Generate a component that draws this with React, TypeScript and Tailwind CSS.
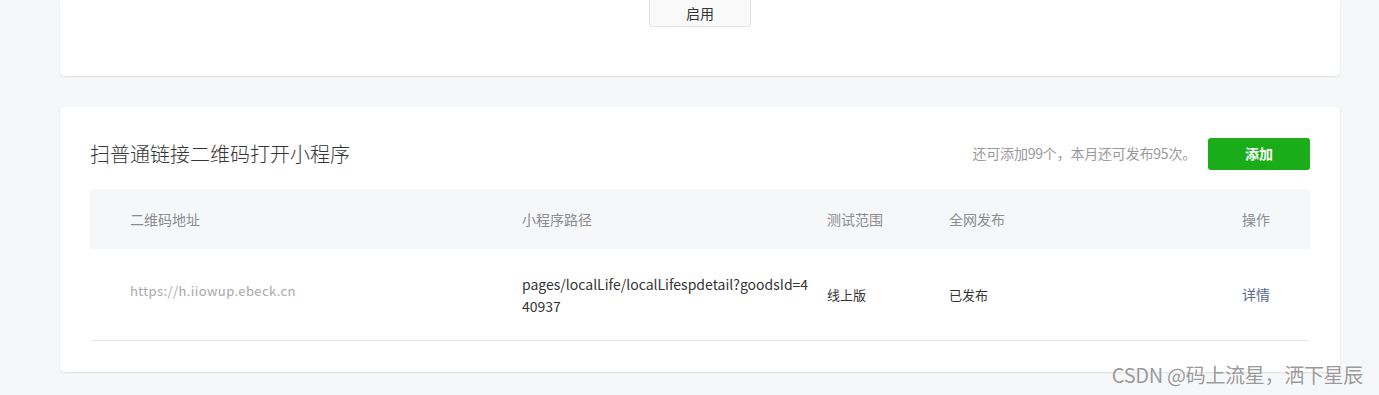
import React from "react";

const rows = [
  {
    url: "https://h.iiowup.ebeck.cn",
    path: "pages/localLife/localLifespdetail?goodsId=440937",
    range: "线上版",
    status: "已发布",
  },
];

export default function App() {
  return (
    <div
      className="relative w-[1379px] h-[395px] overflow-hidden bg-[#f6f7f9] text-[#353535]"
      style={{ fontFamily: '"Noto Sans CJK SC", "Noto Sans", sans-serif' }}
    >
      <div className="px-[60px] pr-[39px]">
        {/* top card */}
        <div className="h-[76px] bg-white rounded-b-[4px] shadow-[0_1px_2px_rgba(0,0,0,0.1)] flex justify-center">
          <button className="mt-[-6px] h-[33px] w-[102px] rounded-[3px] border border-[#e2e2e2] bg-[#f9f9f9] text-[14px] text-[#353535] leading-none pt-[5px]">
            启用
          </button>
        </div>

        {/* second card */}
        <div className="mt-[31px] h-[265px] bg-white rounded-[4px] shadow-[0_1px_2px_rgba(0,0,0,0.1)] px-[30px]">
          <div className="flex items-center justify-between h-[82px] pt-[11px]">
            <h2 className="text-[20px] font-light text-[#353535]">扫普通链接二维码打开小程序</h2>
            <div className="flex items-center gap-[12px]">
              <span className="text-[14px] tracking-[-0.2px] text-[#9a9a9a]">还可添加99个，本月还可发布95次。</span>
              <button className="h-[32px] w-[102px] rounded-[3px] bg-[#1aad19] text-white text-[14px] font-bold">
                添加
              </button>
            </div>
          </div>

          <div className="grid grid-cols-[432px_305px_122px_293px_1fr] h-[60px] items-center bg-[#f6f7f9] text-[14px] text-[#8d8d8d]">
            <div className="pl-[40px]">二维码地址</div>
            <div>小程序路径</div>
            <div>测试范围</div>
            <div>全网发布</div>
            <div>操作</div>
          </div>

          {rows.map((r) => (
            <div
              key={r.path}
              className="grid grid-cols-[432px_305px_122px_293px_1fr] h-[92px] items-center border-b border-[#e7e7eb] text-[14px]"
            >
              <div className="pl-[40px] pb-[8px]">
                <span className="text-[13px] leading-[14px] text-[#a8a8a8] tracking-[0.4px]">{r.url}</span>
              </div>
              <div className="pr-[14px] leading-[22px] break-all text-[#353535]">{r.path}</div>
              <div className="text-[13px] text-[#353535]">{r.range}</div>
              <div className="text-[13px] text-[#353535]">{r.status}</div>
              <div className="text-[14px]">
                <a className="text-[#576b95]">详情</a>
              </div>
            </div>
          ))}
        </div>
      </div>

      <div className="absolute right-[16px] bottom-[5px] text-[20px] tracking-[-0.3px] text-[#9b9b9b] [text-shadow:0_0_2px_#fff]">
        CSDN @码上流星，洒下星辰
      </div>
    </div>
  );
}
